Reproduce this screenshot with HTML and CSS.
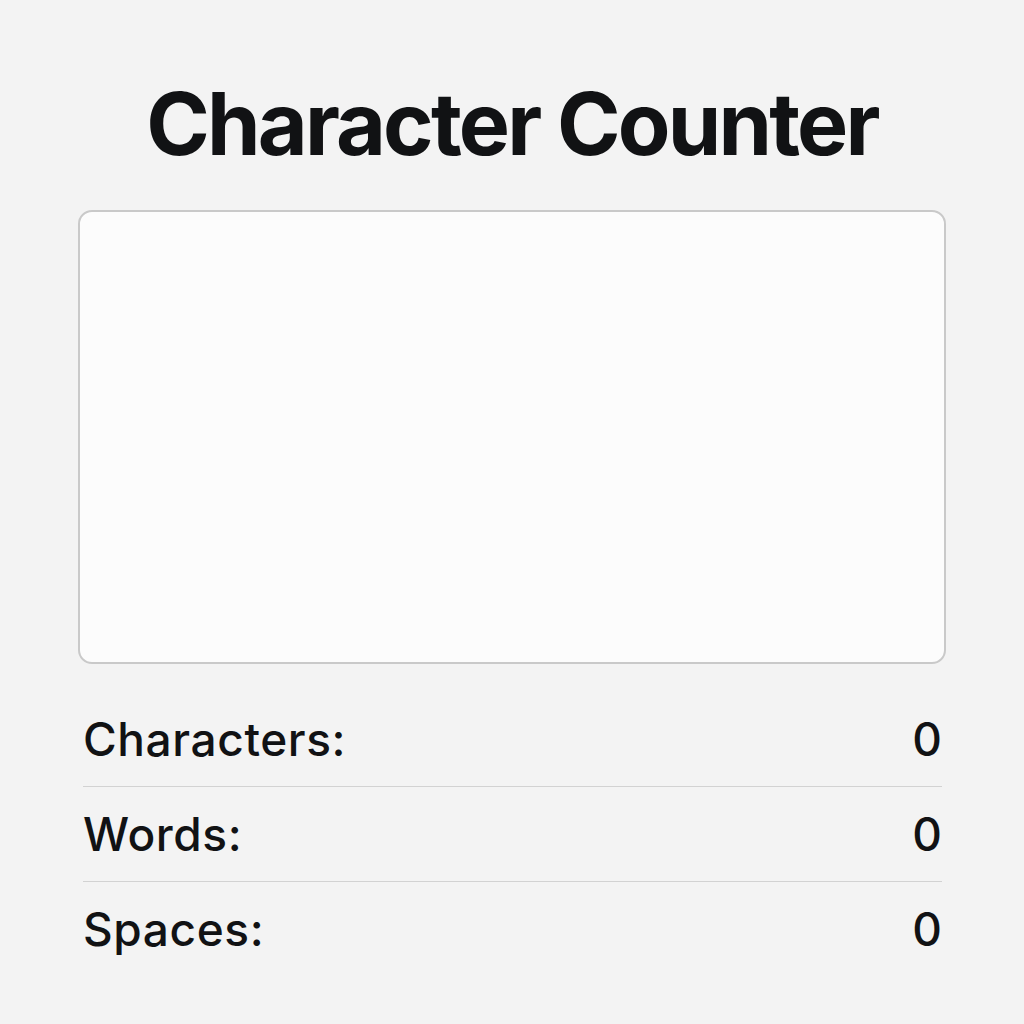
FILE: index.html
```html
<!DOCTYPE html>
<html lang="en">
<head>
<meta charset="utf-8">
<title>Character Counter</title>
<link rel="stylesheet" href="styles.css">
</head>
<body>
<main class="app">
  <h1 class="title">Character Counter</h1>
  <textarea class="input" aria-label="Text"></textarea>
  <ul class="stats">
    <li class="stat"><span class="label">Characters:</span><span class="value">0</span></li>
    <li class="stat"><span class="label">Words:</span><span class="value">0</span></li>
    <li class="stat"><span class="label">Spaces:</span><span class="value">0</span></li>
  </ul>
</main>
</body>
</html>
```
FILE: styles.css
```css
html, body {
  margin: 0;
  padding: 0;
  background: #f3f3f3;
}
body {
  font-family: Inter, "Liberation Sans", Arial, sans-serif;
  color: #111214;
}
.app {
  width: 868px;
  margin: 0 auto;
  padding-top: 78px;
  display: flex;
  flex-direction: column;
}
.title {
  margin: 0;
  font-size: 86px;
  line-height: 92px;
  font-weight: 700;
  text-align: center;
  letter-spacing: -2.8px;
}
.input {
  margin-top: 40px;
  height: 454px;
  box-sizing: border-box;
  border: 2px solid #c9c9c9;
  border-radius: 14px;
  background: #fcfcfc;
  resize: none;
  outline: none;
  padding: 16px;
  font: inherit;
}
.stats {
  list-style: none;
  margin: 28px 0 0;
  padding: 0 4px 0 5px;
}
.stat {
  display: flex;
  justify-content: space-between;
  align-items: center;
  height: 94px;
  font-size: 46px;
  font-weight: 500;
  letter-spacing: 0.6px;
}
.value {
  letter-spacing: 0;
}
.stat + .stat {
  border-top: 1px solid #d2d2d2;
}
```
